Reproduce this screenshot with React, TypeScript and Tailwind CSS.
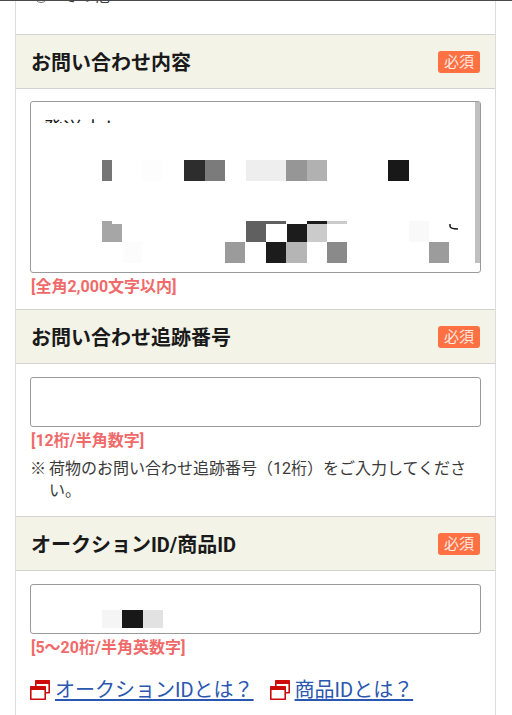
import type { ReactNode } from "react";

type Cell = [x: number, y: number, w: number, h: number, fill: string];

// Redaction blocks, measured from the top left corner of their field.
const messageCells: Cell[] = [
  [72, 59, 10, 21, "#757575"],
  [112, 59, 20, 21, "#fdfdfd"],
  [154, 59, 21, 21, "#2d2d2d"],
  [175, 59, 20, 21, "#7b7b7b"],
  [216, 59, 40, 21, "#eeeeee"],
  [256, 59, 21, 21, "#969696"],
  [277, 59, 20, 21, "#b1b1b1"],
  [358, 59, 21, 21, "#181818"],
  [72, 120, 10, 21, "#a6a6a6"],
  [82, 123, 10, 18, "#a6a6a6"],
  [93, 141, 19, 21, "#fcfcfc"],
  [195, 141, 20, 21, "#9b9b9b"],
  [216, 120, 20, 21, "#606060"],
  [236, 120, 20, 3, "#606060"],
  [257, 123, 20, 18, "#1c1c1c"],
  [277, 120, 20, 3, "#1c1c1c"],
  [277, 123, 20, 18, "#cbcbcb"],
  [297, 120, 20, 3, "#cbcbcb"],
  [236, 141, 20, 21, "#1c1c1c"],
  [256, 141, 21, 21, "#b5b5b5"],
  [297, 141, 20, 21, "#8a8a8a"],
  [379, 120, 20, 21, "#f9f9f9"],
  [399, 141, 20, 21, "#9c9c9c"],
];

const itemCells: Cell[] = [
  [72, 26, 20, 18, "#f5f5f5"],
  [92, 26, 21, 18, "#181818"],
  [113, 26, 20, 18, "#e2e2e2"],
];

function Cells({ cells }: { cells: Cell[] }) {
  return (
    <>
      {cells.map(([x, y, w, h, fill]) => (
        <rect key={`${x}-${y}`} x={x} y={y} width={w} height={h} fill={fill} />
      ))}
    </>
  );
}

function Heading({ htmlFor, children }: { htmlFor: string; children: ReactNode }) {
  return (
    <div className="flex h-[55px] items-center justify-between border-y border-[#d2d2d0] bg-[#f3f3e7] px-[15px]">
      <label htmlFor={htmlFor} className="pt-[2px] text-xl font-bold text-[#1a1a1a]">
        {children}
      </label>
      <span className="h-[22px] rounded-[3px] bg-[#ff7043] px-[6px] text-[15px] leading-[23px] text-[#ffe9e0]">
        必須
      </span>
    </div>
  );
}

function Hint({ children }: { children: ReactNode }) {
  return <p className="mt-[3px] pl-px text-base leading-[22px] font-bold text-[#f06a6a]">{children}</p>;
}

function WindowIcon() {
  return (
    <svg viewBox="0 0 20 20" className="size-5 shrink-0" fill="none" aria-hidden="true">
      <path d="M5.500 0h14l.5.5V13l-.5.5H15.500V12h2.900V4H6.600V6H5V.5z" fill="#cc0a0a" />
      <path fillRule="evenodd" d="M.5 6h15l.5.5v13l-.5.5H.5L0 19.500v-13zM1.600 10v8.400h12.800V10z" fill="#cc0a0a" />
    </svg>
  );
}

function HelpLink({ children }: { children: ReactNode }) {
  return (
    <span className="flex items-center gap-[5px]">
      <WindowIcon />
      <a href="#help" className="text-xl leading-[30px] text-[#2a57b0] underline decoration-2 underline-offset-2">
        {children}
      </a>
    </span>
  );
}

export default function App() {
  return (
    <main className="flex min-h-screen flex-col border-t border-[#4a4a4e] bg-white pr-4 pl-[15px] font-['Roboto','Noto_Sans_CJK_JP',sans-serif] text-[#3a3a3a]">
      <form className="flex-1 border-x border-[#dcdcdc]">
        <div className="h-[33px] overflow-hidden">
          <label className="-mt-[16px] flex h-[22px] items-center gap-[14px] pl-[18px] text-base leading-[22px]">
            <input type="radio" name="kind" className="size-[14px]" />
            その他
          </label>
        </div>

        <Heading htmlFor="message">お問い合わせ内容</Heading>
        <section className="px-[14px] pt-3 pb-[11px]">
          <div className="relative">
            <textarea
              id="message"
              defaultValue="発送中し"
              className="block h-[172px] w-full resize-none rounded-[3px] border border-[#9a9a9a] px-3 pt-[13px] text-xl leading-[30px] text-[#1a1a1a]"
            />
            <svg className="absolute top-0 left-0 h-full w-[445px] max-w-full" aria-hidden="true">
              <rect x="2" y="22" width="440" height="146" fill="#fff" />
              <Cells cells={messageCells} />
              <path d="M420 123v2q0 3 8 3" fill="none" stroke="#1a1a1a" strokeWidth="1.5" />
            </svg>
            <div className="absolute top-px right-px h-[161px] w-[5px] bg-[#c0c0c0]" />
          </div>
          <Hint>[全角2,000文字以内]</Hint>
        </section>

        <Heading htmlFor="tracking">お問い合わせ追跡番号</Heading>
        <section className="px-[14px] pt-[13px] pb-[14px]">
          <input
            id="tracking"
            type="text"
            className="block h-[50px] w-full rounded-[3px] border border-[#9a9a9a] px-3 text-xl"
          />
          <Hint>[12桁/半角数字]</Hint>
          <p className="mt-[6px] flex text-base leading-[22px]">
            <span className="w-[19px] shrink-0">※</span>
            <span>荷物のお問い合わせ追跡番号（12桁）をご入力してください。</span>
          </p>
        </section>

        <Heading htmlFor="item">オークションID/商品ID</Heading>
        <section className="px-[14px] pt-[13px]">
          <div className="relative">
            <input
              id="item"
              type="text"
              className="block h-[50px] w-full rounded-[3px] border border-[#9a9a9a] px-3 text-xl"
            />
            <svg className="pointer-events-none absolute top-0 left-0 h-full w-full" aria-hidden="true">
              <Cells cells={itemCells} />
            </svg>
          </div>
          <Hint>[5〜20桁/半角英数字]</Hint>
          <div className="mt-4 flex flex-wrap gap-x-4">
            <HelpLink>オークションIDとは？</HelpLink>
            <HelpLink>商品IDとは？</HelpLink>
          </div>
        </section>
      </form>
    </main>
  );
}
